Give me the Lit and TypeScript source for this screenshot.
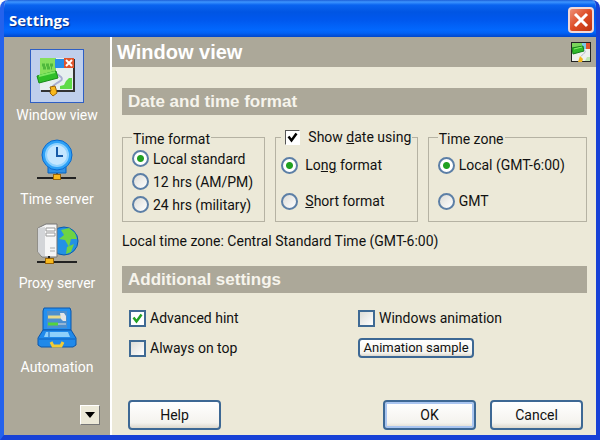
import { LitElement, html, css, svg } from "lit";
import { customElement, property, state } from "lit/decorators.js";
import { classMap } from "lit/directives/class-map.js";

const paintIcon = svg`
  <rect x="7" y="6" width="34" height="33" fill="#333"/>
  <rect x="6" y="5" width="33" height="32" fill="#e6efee"/>
  <path d="M6 5H22V19L6 22Z" fill="#86e05c"/>
  <path d="M8 12h11M9 15h9" stroke="#4fb83c" stroke-width="3" stroke-dasharray="3 1"/>
  <rect x="21" y="6" width="9" height="9" fill="#278ee8"/>
  <rect x="30" y="5" width="10" height="10" fill="#e0542c"/>
  <path d="M32 7l6 6M38 7l-6 6" stroke="#fff" stroke-width="2"/>
  <path d="M38 25v11H26v-3l4-1 2-4 3-3z" fill="#5edb48"/>
  <path d="M23 21l4 3c3 3-1 4-4 6l-4 3v4" fill="none" stroke="#a9aed2" stroke-width="2"/>
  <path d="M3 23L22 18l2 7L5 30z" fill="#2fbf28" stroke="#178b16"/>
  <path d="M5 23l16-4" stroke="#7ce862" stroke-width="2"/>
  <path d="M16 34l5-1 1 3 1 4-4 3-3-3 1-3z" fill="#f8b91d" stroke="#9a640c"/>`;

const icons: Record<string, unknown> = {
  view: paintIcon,
  time: svg`
    <path d="M14 29h18v7H14z" fill="#2f91e6" stroke="#0763c0"/>
    <circle cx="23" cy="18" r="15" fill="#2ea1f6" stroke="#0a69cd"/>
    <circle cx="23" cy="18" r="11" fill="#c4e6ff" stroke="#8fd2ff" stroke-width="2"/>
    <path d="M23 10v9h6" fill="none" stroke="#175aa8" stroke-width="2"/>
    <path d="M23 36v4" stroke="#222"/>
    <path d="M3 41h39" stroke="#222" stroke-width="2"/>
    <rect x="19.500" y="37.500" width="7" height="5" fill="#f8b91d" stroke="#9a6408"/>`,
  proxy: svg`
    <circle cx="30" cy="20" r="14" fill="#2391e4" stroke="#0a5cae"/>
    <path d="M27 9l8-2 6 5 2 6-6 0-2 8-4-7-6-1 5-4zM33 26l7-3-3 8-5 2z" fill="#6ed343"/>
    <path d="M4 7l8-4h11v33H8l-4-5z" fill="#f6f6f6" stroke="#777"/>
    <path d="M4 7l7-1v29H8l-4-4z" fill="#d3d5d8"/>
    <path d="M12 7h9v3h-9zM12 12h9v3h-9z" fill="#fff" stroke="#999"/>
    <path d="M16 27h5M16 30h5" stroke="#aaa"/>
    <path d="M3 41h40M15 35v3" stroke="#222" stroke-width="2"/>
    <rect x="11.500" y="37.500" width="8" height="5" fill="#f8b91d" stroke="#9a6408"/>`,
  auto: svg`
    <path d="M10 3h26l1 3v19H9V6z" fill="#2590f0" stroke="#0a56ac"/>
    <path d="M13 6h20v17H13z" fill="#4d8fce"/>
    <path d="M14 12h14" stroke="#e8d98a" stroke-width="3"/>
    <path d="M26 8h4l2 3v5h-3l-2-2z" fill="#e3e5e6"/>
    <path d="M14 19h10" stroke="#54d33c" stroke-width="3"/>
    <path d="M24 19h8" stroke="#ddd"/>
    <path d="M9 25h28l5 8v7l-3 2H7l-3-2v-7z" fill="#2089ea" stroke="#0a56ac"/>
    <path d="M12 27h22l2 5H10z" fill="#8fd0fb"/>
    <path d="M15 27v5M5 34h36" stroke="#0f62bd"/>
    <path d="M17 37l2 4h8l2-4" fill="none" stroke="#f2cb35" stroke-width="3"/>`,
};

@customElement("side-item")
export class SideItem extends LitElement {
  @property() icon = "view";
  @property() label = "";
  @property({ type: Boolean }) active = false;

  static styles = css`
    :host { display: block; }
    .item {
      display: flex; flex-direction: column; align-items: center;
      width: 100%; height: 84px; padding: 0; border: 0; background: none;
      color: #fff; font: 14px/24px Roboto, "Liberation Sans", sans-serif;
      white-space: nowrap;
    }
    .box { display: grid; place-items: center; width: 54px; height: 54px; box-sizing: border-box; border: 1px solid transparent; }
    .active { background: #bfcfec; border-color: #2f5fc4; }
    .pic { width: 46px; height: 46px; }
  `;

  render() {
    return html`<button class="item" type="button">
      <span class=${classMap({ box: true, active: this.active })}>
        <svg class="pic" viewBox="0 0 46 46" aria-hidden="true">${icons[this.icon]}</svg>
      </span>
      <span>${this.label}</span>
    </button>`;
  }
}

@customElement("app-root")
export class AppRoot extends LitElement {
  @state() private page = "view";

  private pages = [
    ["view", "Window view"],
    ["time", "Time server"],
    ["proxy", "Proxy server"],
    ["auto", "Automation"],
  ];

  static styles = css`
    :host { display: block; font: 14px/20px Roboto, "Liberation Sans", sans-serif; color: #111; }
    * { box-sizing: border-box; }
    .window {
      display: flex; flex-direction: column; min-height: 100vh;
      border: solid #1741d6; border-width: 0 4px 5px;
      border-radius: 8px 8px 0 0; background: #ece9d8; overflow: hidden;
      border-left-color: #2462ec;
    }
    .titlebar {
      display: flex; align-items: center; justify-content: space-between;
      height: 37px; margin: 0 -4px; padding: 3px 6px 0 9px;
      background: linear-gradient(#1c5fd8 0, #3d95ff 2px, #0a64f0 5px, #0055e3 12px, #0058ee 20px, #0268fe 30px, #0161f5 33px, #0146c9 37px);
    }
    .title { margin: 0; color: #fff; font: bold 15px/24px "Open Sans", "Noto Sans", sans-serif; text-shadow: 1px 1px 1px #0a2a80; }
    .close {
      width: 26px; height: 26px; padding: 0; border: 2px solid #f3d9d6; border-radius: 4px;
      background: linear-gradient(135deg, #ee9077, #dd4c25 50%, #bd3310);
    }
    .close svg { display: block; width: 22px; height: 22px; }
    .body { display: flex; flex: 1; }
    .side {
      display: flex; flex-direction: column; flex: 0 0 108px;
      padding: 12px 0 10px; background: #aca899; border-right: 2px solid #fff;
    }
    .more {
      display: grid; place-items: center; align-self: flex-end;
      width: 20px; height: 20px; margin: auto 10px 0 0; padding: 0;
      border: 1px solid; border-color: #fff #777 #777 #fff; background: #ece9d8;
    }
    .more svg { width: 10px; height: 6px; }
    .main { display: flex; flex-direction: column; flex: 1; min-width: 0; }
    .heading {
      display: flex; align-items: center; justify-content: space-between;
      height: 30px; padding: 0 5px; background: #aca899;
    }
    .heading h2 { margin: 0; color: #fff; font: bold 20px/30px "Liberation Sans", sans-serif; }
    .heading svg { width: 20px; height: 20px; }
    .content { display: flex; flex-direction: column; flex: 1; padding: 21px 9px 5px 10px; }
    .bar { margin: 0; padding: 0 6px; background: #aca899; color: #f6f4ec; font: bold 17px/27px "Liberation Sans", sans-serif; }
    .groups { display: grid; grid-template-columns: 143fr 142fr 159fr; gap: 10px; margin-top: 12px; }
    .group { min-width: 0; height: 95px; margin: 0; padding: 0 9px; border: 1px solid #b5b2a3; white-space: nowrap; }
    .group.mid { padding: 0 5px; }
    .legend { display: flex; align-items: center; height: 20px; padding: 4px 1px 0; }
    .legend.tick { padding: 0 1px 0 4px; }
    .row { display: flex; align-items: center; gap: 4px; height: 23px; }
    .tall { height: 36px; }
    .mid .row { gap: 7px; }
    .tick .row { gap: 8px; height: 20px; }
    input { appearance: none; flex: none; margin: 0; background: linear-gradient(135deg, #dcdcd7, #fff) no-repeat center; }
    .radio { width: 17px; height: 17px; border: 2px solid #5c7fa6; border-radius: 50%; }
    .radio:checked { background: radial-gradient(circle, #21a121 0 3px, #fff 4px); }
    .check { width: 17px; height: 17px; border: 2px solid #3f6a94; }
    .check:checked {
      background: #fff url("data:image/svg+xml,%3Csvg xmlns='http://www.w3.org/2000/svg' viewBox='0 0 13 13'%3E%3Cpath d='M2.500 5.500l3 4 5-7' fill='none' stroke='%2321a121' stroke-width='2.500'/%3E%3C/svg%3E");
    }
    .classic { width: 15px; height: 15px; border: 1px solid; border-color: #555 #fff #fff #555; }
    .classic:checked {
      background: #fff url("data:image/svg+xml,%3Csvg xmlns='http://www.w3.org/2000/svg' viewBox='0 0 13 13'%3E%3Cpath d='M2.500 5.500l3 4 5-7' fill='none' stroke='%23000' stroke-width='2.500'/%3E%3C/svg%3E");
    }
    .zone { margin: 9px 0 15px; }
    .options { display: grid; grid-template-columns: 1fr 1fr; margin: 10px 0 0 7px; align-items: center; justify-items: start; }
    .options .row { height: 30px; }
    .btn {
      width: 93px; height: 30px; padding: 0; border: 2px solid #3d6894; border-radius: 4px;
      background: linear-gradient(#fff, #f4f3ee 80%, #dcd8cd); color: #111; font: inherit; white-space: nowrap;
    }
    .small { width: 116px; height: 20px; font-size: 13px; line-height: 16px; }
    .ok { box-shadow: inset 0 0 0 2px #a9c5f0; }
    .foot { display: flex; gap: 14px; margin: auto 4px 0 6px; }
    .help { margin-right: auto; }
  `;

  private option(kind: string, group: string, text: unknown, checked = false, extra = "") {
    return html`<label class="row ${extra}">
      <input class=${kind} type=${kind === "radio" ? "radio" : "checkbox"} name=${group} ?checked=${checked}>
      <span>${text}</span>
    </label>`;
  }

  render() {
    return html`<div class="window">
      <header class="titlebar">
        <h1 class="title">Settings</h1>
        <button class="close" type="button" aria-label="Close">
          <svg viewBox="0 0 22 22"><path d="M5 5l12 12M17 5L5 17" stroke="#fff" stroke-width="3"/></svg>
        </button>
      </header>
      <div class="body">
        <nav class="side">
          ${this.pages.map(([id, label]) => html`<side-item .icon=${id} .label=${label}
            .active=${this.page === id} @click=${() => (this.page = id)}></side-item>`)}
          <button class="more" type="button" aria-label="More pages">
            <svg viewBox="0 0 10 6"><path d="M0 0h10L5 6z"/></svg>
          </button>
        </nav>
        <main class="main">
          <div class="heading">
            <h2>Window view</h2>
            <svg viewBox="0 0 20 20" aria-hidden="true">
              <rect x="0.500" y="0.500" width="19" height="19" fill="#eef1ee" stroke="#222"/>
              <path d="M1 1h10v5L1 8z" fill="#79d45b"/>
              <path d="M11 1h4v6h-4z" fill="#7cc8e8"/>
              <path d="M15 1h4v6h-4z" fill="#e0542c"/>
              <path d="M1 6l11-2 1 5-11 3z" fill="#2fb929" stroke="#14811a"/>
              <path d="M3 7l8-2" stroke="#8df06c"/>
              <path d="M13 8c3 1 0 4-3 6" fill="none" stroke="#b4b8cc"/>
              <path d="M14 19l2-4h3v4z" fill="#bfe8b2"/>
              <path d="M9 14l3 3-1 3H7l1-3z" fill="#f2b61b"/>
            </svg>
          </div>
          <form class="content" @submit=${(e: Event) => e.preventDefault()}>
            <h3 class="bar">Date and time format</h3>
            <div class="groups">
              <fieldset class="group">
                <legend class="legend">Time format</legend>
                ${this.option("radio", "time", "Local standard", true)}
                ${this.option("radio", "time", "12 hrs (AM/PM)")}
                ${this.option("radio", "time", "24 hrs (military)")}
              </fieldset>
              <fieldset class="group mid">
                <legend class="legend tick">
                  ${this.option("classic", "showdate", html`Show <u>d</u>ate using`, true)}
                </legend>
                ${this.option("radio", "date", html`Lo<u>ng</u> format`, true, "tall")}
                ${this.option("radio", "date", html`<u>S</u>hort format`, false, "tall")}
              </fieldset>
              <fieldset class="group">
                <legend class="legend">Time zone</legend>
                ${this.option("radio", "zone", "Local (GMT-6:00)", true, "tall")}
                ${this.option("radio", "zone", "GMT", false, "tall")}
              </fieldset>
            </div>
            <p class="zone">Local time zone: Central Standard Time (GMT-6:00)</p>
            <h3 class="bar">Additional settings</h3>
            <div class="options">
              ${this.option("check", "hint", "Advanced hint", true)}
              ${this.option("check", "anim", "Windows animation")}
              ${this.option("check", "top", "Always on top")}
              <button class="btn small" type="button">Animation sample</button>
            </div>
            <div class="foot">
              <button class="btn help" type="button">Help</button>
              <button class="btn ok" type="submit">OK</button>
              <button class="btn" type="button">Cancel</button>
            </div>
          </form>
        </main>
      </div>
    </div>`;
  }
}
